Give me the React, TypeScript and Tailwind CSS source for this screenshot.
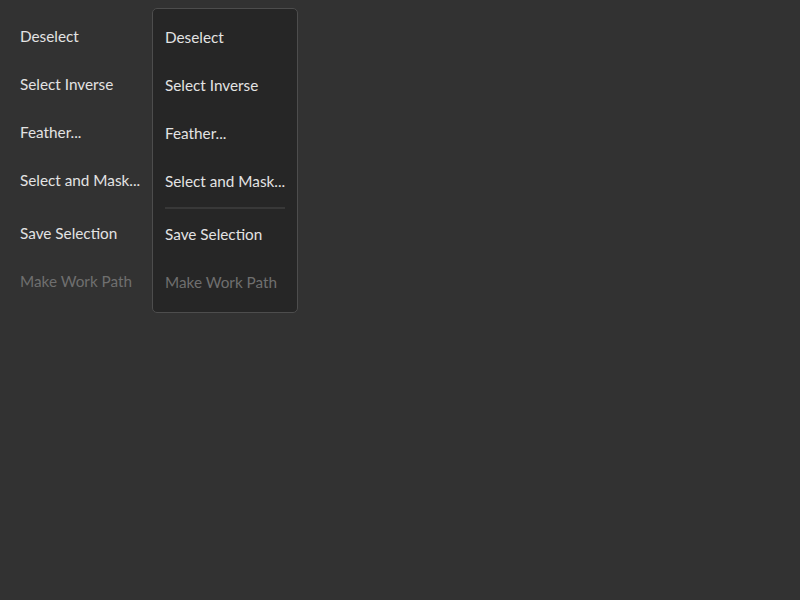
const items = [
  { label: 'Deselect' },
  { label: 'Select Inverse' },
  { label: 'Feather...' },
  { label: 'Select and Mask...', divider: true },
  { label: 'Save Selection' },
  { label: 'Make Work Path', disabled: true },
];

function MenuItems({ showDivider }: { showDivider: boolean }) {
  return (
    <>
      {items.map((item) => (
        <div key={item.label}>
          <div
            className={`flex h-[48px] items-center whitespace-nowrap text-[15.3px] ${
              item.disabled ? 'text-[#6f6f6f]' : 'text-[#e3e3e3]'
            }`}
          >
            {item.label}
          </div>
          {item.divider && (
            <div className="flex h-[5px] items-center">
              <div className={`h-[2px] w-full ${showDivider ? 'bg-[#383838]' : 'bg-transparent'}`} />
            </div>
          )}
        </div>
      ))}
    </>
  );
}

export default function App() {
  return (
    <div
      className="flex min-h-screen items-start bg-[#323232]"
      style={{ fontFamily: "Lato, 'Open Sans', sans-serif" }}
    >
      <div className="w-[152px] pl-[20px] pt-[12px]">
        <MenuItems showDivider={false} />
      </div>
      <div className="mt-[8px] w-[146px] rounded-[5px] border border-[#4d4d4d] bg-[#262626] px-[12px] pt-[4px] pb-[6px]">
        <MenuItems showDivider />
      </div>
    </div>
  );
}
